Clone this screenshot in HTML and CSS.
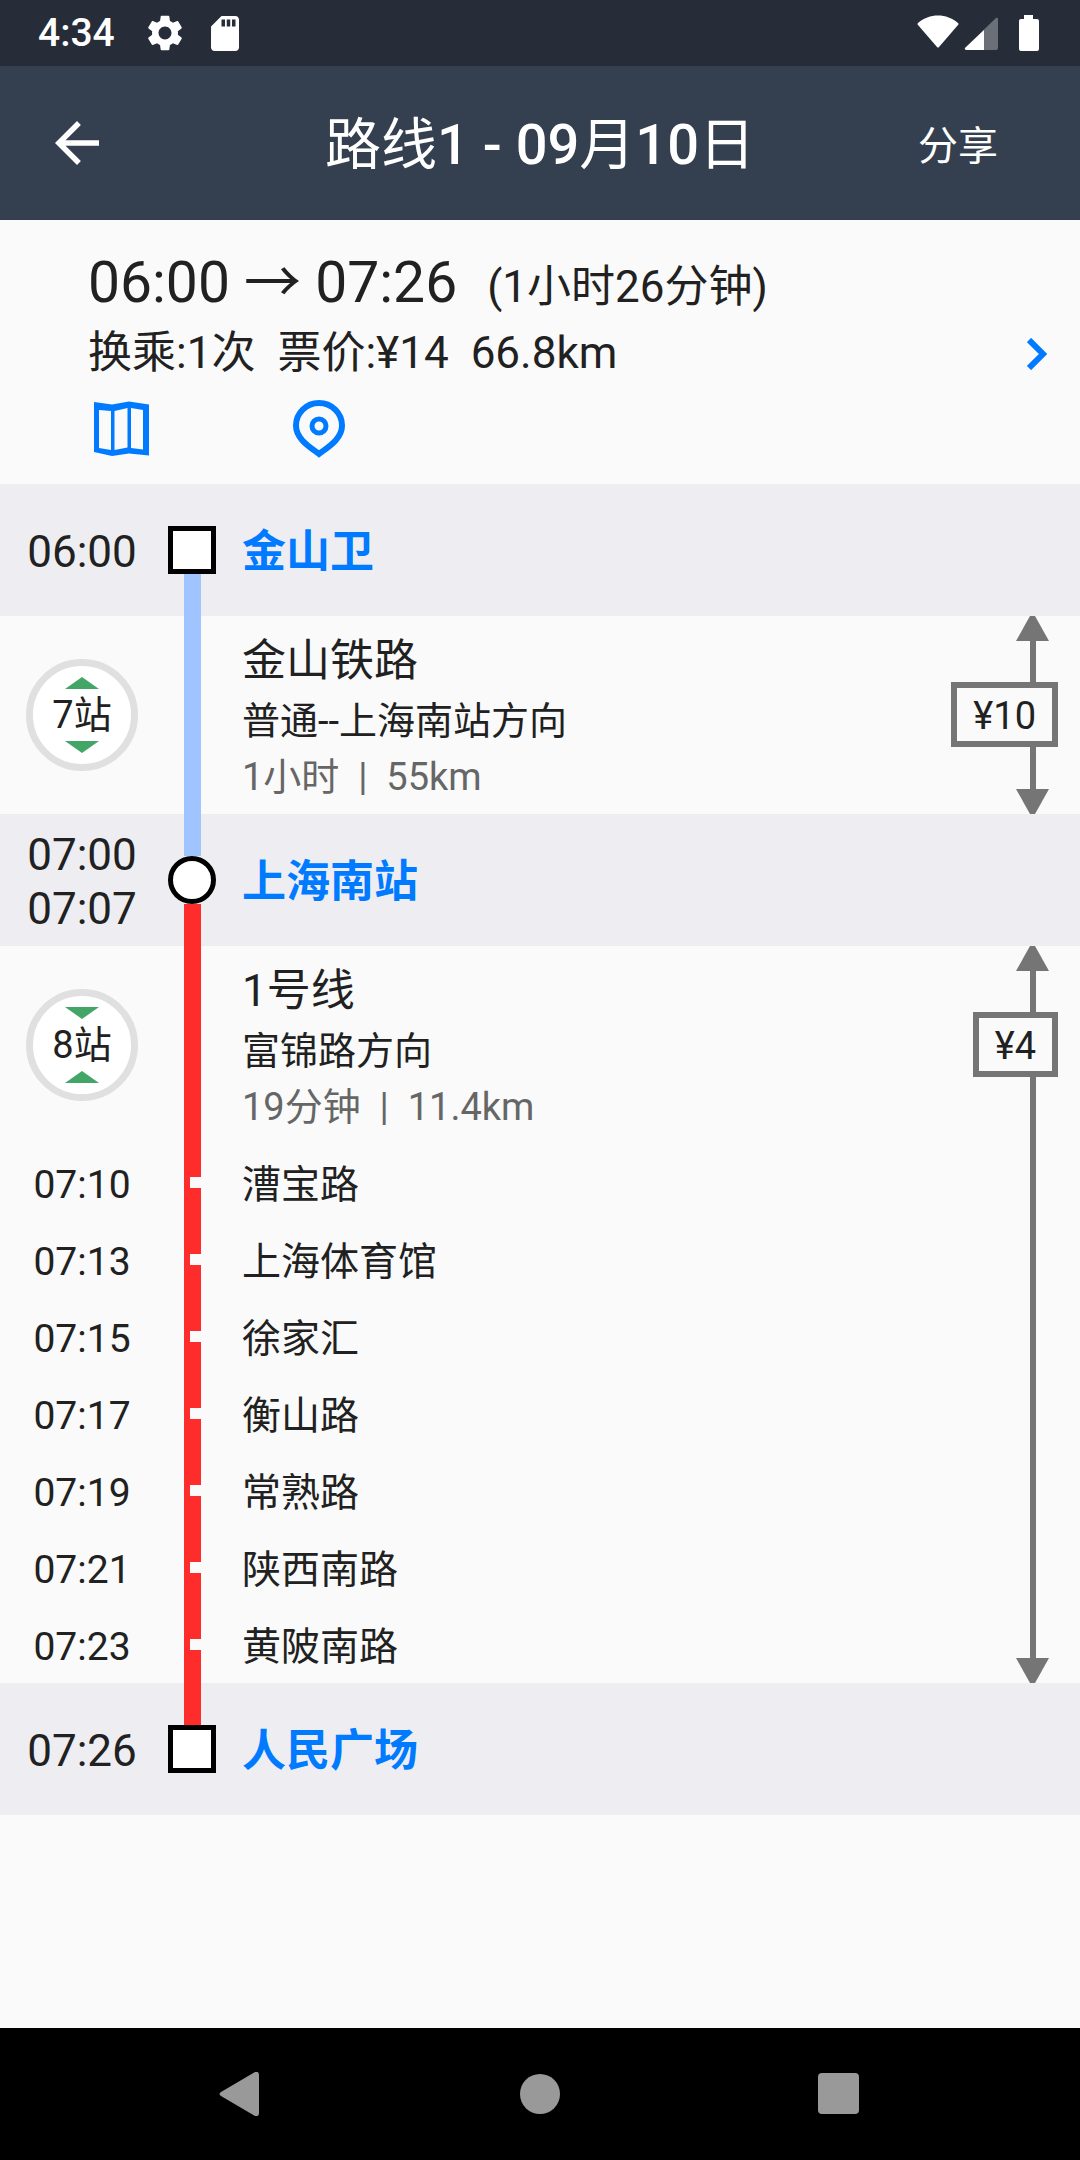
FILE: index.html
```html
<!DOCTYPE html>
<html lang="zh-CN">

<head>
  <meta charset="UTF-8">
  <meta name="viewport" content="width=device-width, initial-scale=1.0">
  <title>路线1 - 09月10日</title>
  <link rel="stylesheet" href="styles.css">
</head>

<body>
  <div class="status">
    <span class="status__time">4:34</span>
    <svg class="status__gear" viewBox="2 2 20 20">
      <path d="M19.14 12.94c.04-.3.06-.61.06-.94 0-.32-.02-.64-.07-.94l2.03-1.58c.18-.14.23-.41.12-.61l-1.92-3.32c-.12-.22-.37-.29-.59-.22l-2.39.96c-.5-.38-1.03-.7-1.62-.94l-.36-2.54c-.04-.24-.24-.41-.48-.41h-3.84c-.24 0-.43.17-.47.41l-.36 2.54c-.59.24-1.13.57-1.62.94l-2.39-.96c-.22-.08-.47 0-.59.22L2.74 8.87c-.12.21-.08.47.12.61l2.03 1.58c-.05.3-.09.63-.09.94s.02.64.07.94l-2.03 1.58c-.18.14-.23.41-.12.61l1.92 3.32c.12.22.37.29.59.22l2.39-.96c.5.38 1.03.7 1.62.94l.36 2.54c.05.24.24.41.48.41h3.84c.24 0 .44-.17.47-.41l.36-2.54c.59-.24 1.13-.56 1.62-.94l2.39.96c.22.08.47 0 .59-.22l1.92-3.32c.12-.22.07-.47-.12-.61l-2.01-1.58zM12 15.6c-1.98 0-3.6-1.62-3.6-3.6s1.62-3.6 3.6-3.6 3.6 1.62 3.6 3.6-1.62 3.6-3.6 3.6z" />
    </svg>
    <svg class="status__card" viewBox="4 2 16 20">
      <path d="M18 2h-8L4.02 8 4 20c0 1.100.9 2 2 2h12c1.100 0 2-.9 2-2V4c0-1.100-.9-2-2-2zm-6 6h-2V4h2v4zm3 0h-2V4h2v4zm3 0h-2V4h2v4z" />
    </svg>
    <svg class="status__signal" viewBox="0 0 122 36">
      <path d="M1 8C12-2 30-2 41 8q1 1 0 2L22 32q-1 1-2 0L1 10q-1-1 0-2z" />
      <path d="M48 33L79 3q2-1 2 1v29q0 2-2 2H49q-2-1-1-2z" opacity=".32" />
      <path d="M48 33L67 15v20H49q-2-1-1-2z" />
      <path d="M107 0h9v4h4q2 0 2 2v28q0 2-2 2h-16q-2 0-2-2V6q0-2 2-2h3z" />
    </svg>
  </div>

  <header class="header">
    <button class="header__back" aria-label="返回">
      <svg viewBox="0 0 24 24">
        <path d="M20 11H7.830l5.590-5.590L12 4l-8 8 8 8 1.410-1.410L7.830 13H20v-2z" />
      </svg>
    </button>
    <h1 class="header__title">路线<b>1 - 09</b>月<b>10</b>日</h1>
    <button class="header__share">分享</button>
  </header>

  <main class="main">
    <section class="summary">
      <div class="summary__body">
        <p class="summary__time">06:00 → 07:26<span class="summary__duration">(1小时26分钟)</span></p>
        <p class="summary__info"><span>换乘:1次</span><span>票价:¥14</span><span>66.8km</span></p>
        <div class="summary__tools">
          <button class="tool" aria-label="线路图">
            <svg viewBox="0 0 66 66">
              <path class="tool__fill" fill-rule="evenodd" d="M6 6L24 8.500L41 5.500L61 8.500V59.500L41 57.500L24 60L6 56ZM11 14V52L23 54V15ZM26.500 15V54L39.500 51.500V12ZM43 12V52L55 53.500V14Z" />
            </svg>
          </button>
          <button class="tool" aria-label="地图定位">
            <svg viewBox="0 0 66 66">
              <path class="tool__line" d="M33 58C24 51 10 43 10 29.500a23 22.500 0 0 1 46 0C56 43 42 51 33 58z" />
              <circle class="tool__ring" cx="33" cy="30" r="7" />
            </svg>
          </button>
        </div>
      </div>
      <a class="summary__more" href="#detail" aria-label="详情">
        <svg viewBox="0 0 20 32">
          <path d="M2 2L16 16L2 30" />
        </svg>
      </a>
    </section>

    <div class="route" id="detail">
      <section class="station">
        <div class="cell-time">06:00</div>
        <div class="rail">
          <i class="rail__line"></i>
          <i class="rail__mark"></i>
          <i class="rail__line rail__line--js"></i>
        </div>
        <a class="station__name" href="#jinshanwei">金山卫</a>
      </section>

      <section class="leg">
        <div class="leg__rows">
          <div class="ride">
            <button class="badge">
              <svg class="badge__arrow" viewBox="0 0 34 12"><path d="M0 12L17 0L34 12z" /></svg>
              <span class="badge__text">7站</span>
              <svg class="badge__arrow" viewBox="0 0 34 12"><path d="M0 0L17 12L34 0z" /></svg>
            </button>
            <div class="rail"><i class="rail__line rail__line--js"></i></div>
            <div class="ride__text">
              <h2 class="ride__title">金山铁路</h2>
              <p class="ride__way">普通--上海南站方向</p>
              <p class="ride__meta">1小时&nbsp; | &nbsp;55km</p>
            </div>
          </div>
        </div>
        <div class="fare">
          <svg class="fare__arrow" viewBox="0 0 33 25"><path d="M0 25L14 0H19L33 25z" /></svg>
          <i class="fare__line fare__line--top"></i>
          <span class="fare__price">¥10</span>
          <i class="fare__line"></i>
          <svg class="fare__arrow" viewBox="0 0 33 25"><path d="M0 0L14 25H19L33 0z" /></svg>
        </div>
      </section>

      <section class="station">
        <div class="cell-time">07:00<br>07:07</div>
        <div class="rail">
          <i class="rail__line rail__line--js"></i>
          <i class="rail__mark rail__mark--round"></i>
          <i class="rail__line rail__line--m1"></i>
        </div>
        <a class="station__name" href="#shanghainan">上海南站</a>
      </section>

      <section class="leg">
        <div class="leg__rows">
          <div class="ride">
            <button class="badge">
              <svg class="badge__arrow" viewBox="0 0 34 12"><path d="M0 0L17 12L34 0z" /></svg>
              <span class="badge__text">8站</span>
              <svg class="badge__arrow" viewBox="0 0 34 12"><path d="M0 12L17 0L34 12z" /></svg>
            </button>
            <div class="rail"><i class="rail__line rail__line--m1"></i></div>
            <div class="ride__text">
              <h2 class="ride__title">1号线</h2>
              <p class="ride__way">富锦路方向</p>
              <p class="ride__meta">19分钟&nbsp; | &nbsp;11.4km</p>
            </div>
          </div>
          <ol class="stops">
            <li class="stop">
              <div class="cell-time">07:10</div>
              <div class="rail"><i class="rail__line rail__line--m1 rail__line--stop"></i></div>
              <span class="stop__name">漕宝路</span>
            </li>
            <li class="stop">
              <div class="cell-time">07:13</div>
              <div class="rail"><i class="rail__line rail__line--m1 rail__line--stop"></i></div>
              <span class="stop__name">上海体育馆</span>
            </li>
            <li class="stop">
              <div class="cell-time">07:15</div>
              <div class="rail"><i class="rail__line rail__line--m1 rail__line--stop"></i></div>
              <span class="stop__name">徐家汇</span>
            </li>
            <li class="stop">
              <div class="cell-time">07:17</div>
              <div class="rail"><i class="rail__line rail__line--m1 rail__line--stop"></i></div>
              <span class="stop__name">衡山路</span>
            </li>
            <li class="stop">
              <div class="cell-time">07:19</div>
              <div class="rail"><i class="rail__line rail__line--m1 rail__line--stop"></i></div>
              <span class="stop__name">常熟路</span>
            </li>
            <li class="stop">
              <div class="cell-time">07:21</div>
              <div class="rail"><i class="rail__line rail__line--m1 rail__line--stop"></i></div>
              <span class="stop__name">陕西南路</span>
            </li>
            <li class="stop">
              <div class="cell-time">07:23</div>
              <div class="rail"><i class="rail__line rail__line--m1 rail__line--stop"></i></div>
              <span class="stop__name">黄陂南路</span>
            </li>
          </ol>
        </div>
        <div class="fare">
          <svg class="fare__arrow" viewBox="0 0 33 25"><path d="M0 25L14 0H19L33 25z" /></svg>
          <i class="fare__line fare__line--top"></i>
          <span class="fare__price">¥4</span>
          <i class="fare__line"></i>
          <svg class="fare__arrow" viewBox="0 0 33 25"><path d="M0 0L14 25H19L33 0z" /></svg>
        </div>
      </section>

      <section class="station">
        <div class="cell-time">07:26</div>
        <div class="rail">
          <i class="rail__line rail__line--m1"></i>
          <i class="rail__mark"></i>
          <i class="rail__line"></i>
        </div>
        <a class="station__name" href="#renminguangchang">人民广场</a>
      </section>
    </div>
  </main>

  <nav class="navbar">
    <button class="navbar__btn" aria-label="返回">
      <svg viewBox="0 0 44 44"><path d="M3 20L37 0q4-1 4 3v38q0 4-4 3L3 24q-3-2 0-4z" /></svg>
    </button>
    <button class="navbar__btn" aria-label="主页">
      <svg viewBox="0 0 44 44"><circle cx="22" cy="22" r="20" /></svg>
    </button>
    <button class="navbar__btn" aria-label="最近任务">
      <svg viewBox="0 0 44 44"><rect x="0" y="1" width="41" height="41" rx="4" /></svg>
    </button>
  </nav>
</body>

</html>
```

FILE: styles.css
```css
* {
  margin: 0;
  padding: 0;
  box-sizing: border-box;
}

body {
  display: flex;
  flex-direction: column;
  min-height: 100vh;
  background: #fafafa;
  color: #212121;
  font-family: Roboto, "Noto Sans CJK SC", sans-serif;
  font-size: 38px;
}

button {
  border: 0;
  background: none;
  color: inherit;
  font: inherit;
  cursor: pointer;
}

a {
  color: #007aff;
  text-decoration: none;
}

svg {
  display: block;
}

/* ============= 状态栏 ============= */
.status {
  display: flex;
  align-items: center;
  height: 66px;
  padding: 0 41px 0 38px;
  background: #262c38;
  color: #fff;
  fill: #fff;
}

.status__time {
  font-size: 39px;
  font-weight: 500;
}

.status__gear {
  width: 36px;
  height: 36px;
  margin-left: 32px;
}

.status__card {
  width: 28px;
  height: 35px;
  margin-left: 28px;
}

.status__signal {
  width: 122px;
  height: 36px;
  margin-left: auto;
}

/* ============= 标题栏 ============= */
.header {
  display: grid;
  grid-template-columns: 1fr auto 1fr;
  align-items: center;
  height: 154px;
  padding: 0 44px;
  background: #343f4f;
  color: #fff;
}

.header__back svg {
  width: 66px;
  height: 66px;
  fill: #fff;
}

.header__back {
  justify-self: start;
}

.header__title {
  padding-top: 4px;
  font-size: 56px;
  font-weight: 400;
  line-height: 66px;
}

.header__title b {
  font-weight: 500;
}

.header__share {
  justify-self: end;
  padding: 0 38px;
  font-size: 40px;
}

/* ============= 行程概要 ============= */
.main {
  flex: 1;
}

.summary {
  display: flex;
  justify-content: space-between;
  align-items: center;
  padding: 26px 33px 22px 88px;
}

.summary__time {
  font-size: 57px;
  line-height: 74px;
}

.summary__duration {
  margin-left: 30px;
  font-size: 44px;
  line-height: 44px;
}

.summary__info {
  display: flex;
  gap: 22px;
  font-size: 44px;
  line-height: 66px;
}

.summary__tools {
  display: flex;
  gap: 132px;
  margin-top: 10px;
}

.tool svg {
  width: 66px;
  height: 66px;
}

.tool__fill {
  fill: #007aff;
}

.tool__line,
.tool__ring {
  fill: none;
  stroke: #007aff;
  stroke-width: 6;
}

.tool__ring {
  stroke-width: 5;
}

.summary__more svg {
  width: 20px;
  height: 32px;
  fill: none;
  stroke: #007aff;
  stroke-width: 6;
}

/* ============= 线路 ============= */
.station,
.ride,
.stop {
  display: grid;
  grid-template-columns: 164px 56px 1fr;
}

.cell-time {
  align-self: center;
  padding-top: 4px;
  text-align: center;
}

.rail {
  display: flex;
  flex-direction: column;
  align-items: center;
}

.rail__line {
  flex: 1;
  width: 17px;
}

.rail__line--js {
  background: #9fc4ff;
}

.rail__line--m1 {
  background: #ff2c2c;
}

/* 经停站的缺口 */
.rail__line--stop {
  display: flex;
  justify-content: flex-end;
  align-items: center;
}

.rail__line--stop::after {
  content: "";
  width: 11px;
  height: 11px;
  background: #fafafa;
}

.rail__mark {
  width: 48px;
  height: 48px;
  border: 5px solid #000;
  background: #fff;
}

.rail__mark--round {
  border-radius: 50%;
}

.station {
  height: 132px;
  background: #eeeef2;
  font-size: 44px;
  line-height: 54px;
}

.station__name {
  align-self: center;
  padding: 4px 0 0 22px;
  font-weight: 700;
}

.leg {
  display: flex;
}

.leg__rows {
  flex: 1;
}

.ride {
  height: 198px;
}

.ride__text {
  align-self: center;
  padding: 4px 0 0 22px;
}

.ride__title {
  font-size: 44px;
  font-weight: 400;
  line-height: 64px;
}

.ride__way,
.ride__meta {
  line-height: 56px;
}

.ride__meta {
  color: #666;
}

.badge {
  display: flex;
  flex-direction: column;
  place-self: center;
  justify-content: center;
  align-items: center;
  width: 112px;
  height: 112px;
  border: 7px solid #e0e0e0;
  border-radius: 50%;
  background: #fff;
}

.badge__arrow {
  width: 34px;
  height: 12px;
  fill: #43a667;
}

.badge__text {
  line-height: 52px;
}

.stops {
  list-style: none;
}

.stop {
  height: 77px;
  font-size: 39px;
  line-height: 54px;
}

.stop__name {
  align-self: center;
  padding: 4px 0 0 22px;
}

/* ============= 票价 ============= */
.fare {
  display: flex;
  flex-direction: column;
  align-items: flex-end;
  margin-right: 22px;
}

.fare__arrow {
  width: 33px;
  height: 25px;
  margin-right: 9px;
  fill: #757575;
}

.fare__line {
  flex: 1;
  width: 6px;
  margin-right: 22px;
  background: #757575;
}

.fare__line--top {
  flex: none;
  height: 41px;
}

.fare__price {
  padding: 4px 16px 0;
  border: 6px solid #757575;
  line-height: 49px;
}

/* ============= 导航栏 ============= */
.navbar {
  display: flex;
  height: 132px;
  padding: 0 90px;
  background: #000;
}

.navbar__btn {
  display: flex;
  flex: 1;
  justify-content: center;
  align-items: center;
}

.navbar__btn svg {
  width: 44px;
  height: 44px;
  fill: #999;
}
```
